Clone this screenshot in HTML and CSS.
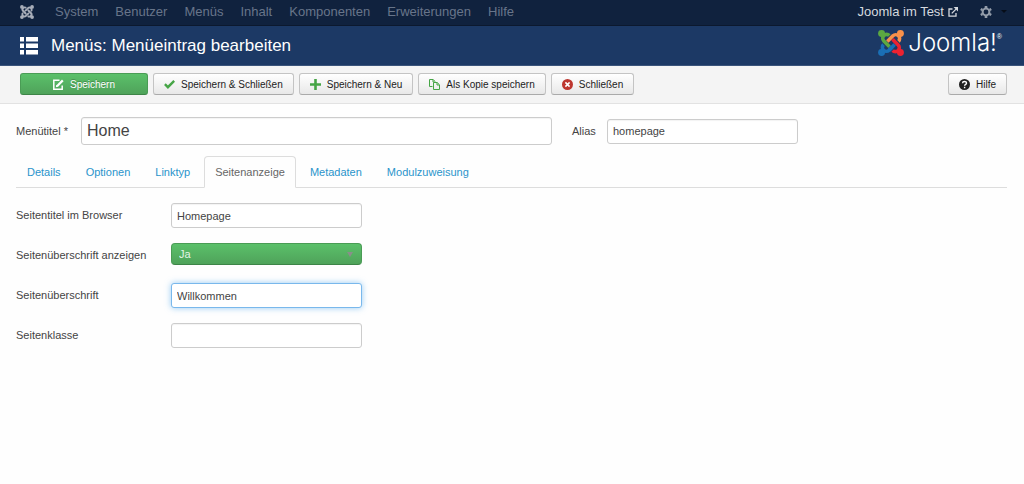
FILE: index.html
```
<!DOCTYPE html>
<html lang="de">
<head>
<meta charset="utf-8">
<title>Menüs: Menüeintrag bearbeiten</title>
<link rel="stylesheet" href="styles.css">
</head>
<body>
<svg class="defs" aria-hidden="true">
  <defs>
    <g id="hook">
      <path d="M15.4 13.4L10.2 18.6a3.6 3.6 0 0 1-5.1-5.1" fill="none" stroke="currentColor" stroke-width="3.3"/>
      <circle cx="3.3" cy="20.7" r="3.2" fill="currentColor"/>
    </g>
  </defs>
</svg>
<nav class="navbar">
  <a class="brand" href="#" aria-label="Kontrollzentrum">
    <svg width="14" height="14" viewBox="0 0 24 24"><use href="#hook"/><use href="#hook" transform="rotate(90 12 12)"/><use href="#hook" transform="rotate(180 12 12)"/><use href="#hook" transform="rotate(270 12 12)"/></svg>
  </a>
  <div class="menu">
    <a href="#">System</a><a href="#">Benutzer</a><a href="#">Menüs</a><a href="#">Inhalt</a><a href="#">Komponenten</a><a href="#">Erweiterungen</a><a href="#">Hilfe</a>
  </div>
  <a class="site" href="#">Joomla im Test
    <svg width="10" height="10" viewBox="0 0 10 10" fill="none" stroke="currentColor" stroke-width="1.3"><path d="M4.5 2H1v7.2h7V6"/><path d="M3.8 6.4L8.3 1.9"/><path d="M5.6 0H10v4.4z" fill="currentColor" stroke="none"/></svg>
  </a>
  <button class="settings" type="button" aria-label="Einstellungen">
    <svg width="12" height="12" viewBox="0 0 12 12"><circle cx="6" cy="6" r="3.400" fill="none" stroke="currentColor" stroke-width="2"/><path d="M6 0v2M6 10v2M.800 3l1.700 1M9.500 8l1.700 1M.800 9l1.700-1M9.500 4l1.700-1" stroke="currentColor" stroke-width="2.600"/></svg>
    <span class="caret"></span>
  </button>
</nav>
<header class="header">
  <svg width="18" height="18" viewBox="0 0 18 18" fill="#fff"><path d="M0 0h4v4.500H0zM6 0h12v4.500H6zM0 6.500h4V11H0zM6 6.500h12V11H6zM0 13h4v4.500H0zM6 13h12v4.500H6z"/></svg>
  <h1>Menüs: Menüeintrag bearbeiten</h1>
  <div class="logo">
    <svg width="26" height="26" viewBox="0 0 24 24">
      <use href="#hook" color="#1a6fb5"/>
      <use href="#hook" color="#5ba841" transform="rotate(90 12 12)"/>
      <use href="#hook" color="#f9914a" transform="rotate(180 12 12)"/>
      <use href="#hook" color="#ec2230" transform="rotate(270 12 12)"/>
      <path d="M10.200 18.600L13 15.800" stroke="#1a6fb5" stroke-width="3.300"/>
    </svg>
    <span class="wordmark">Joomla!</span><span class="reg">®</span>
  </div>
</header>
<div class="toolbar">
  <button class="btn primary" type="button"><svg width="11" height="11" viewBox="0 0 11 11" fill="none" stroke="#fff" stroke-width="1.500"><path d="M6.500 1.200H.800v9h8.400V6.500"/><path d="M4 7.200L9.800 1.400" stroke-width="2.200"/><path d="M2.800 8.300l.600-2.500 1.800 1.800z" fill="#fff" stroke="none"/></svg>Speichern</button>
  <button class="btn" type="button"><svg width="11" height="11" viewBox="0 0 11 11" fill="none" stroke="#46a546" stroke-width="2.400"><path d="M.900 5.200l3 3L10.200 1.900"/></svg>Speichern &amp; Schließen</button>
  <button class="btn" type="button"><svg width="11" height="11" viewBox="0 0 11 11" fill="#46a546"><path d="M4.200 0h2.600v4.200H11v2.600H6.800V11H4.200V6.800H0V4.200h4.200z"/></svg>Speichern &amp; Neu</button>
  <button class="btn" type="button"><svg width="11" height="11" viewBox="0 0 11 11" fill="none" stroke="#46a546"><path d="M3.500 7.500h-3v-7h3.700l2 2M4 .700v2.300h2"/><path d="M4.500 3.500h3.700l2.300 2.300v4.700h-6zM8 3.700v2.300h2.300"/></svg>Als Kopie speichern</button>
  <button class="btn" type="button"><svg width="11" height="11" viewBox="0 0 11 11"><circle cx="5.500" cy="5.500" r="5.500" fill="#bd362f"/><path d="M3.400 3.400l4.200 4.200M7.600 3.400L3.400 7.600" stroke="#fff" stroke-width="1.500"/></svg>Schließen</button>
  <button class="btn help" type="button"><svg width="11" height="11" viewBox="0 0 11 11" fill="none"><circle cx="5.500" cy="5.500" r="5.500" fill="#222"/><path d="M3.500 4.200C3.600 1.900 7.500 1.900 7.500 4.200 7.500 5.400 5.600 5.300 5.600 6.800M5.600 7.700v1.500" stroke="#fff" stroke-width="1.400"/></svg>Hilfe</button>
</div>
<main>
  <form>
    <div class="title-row">
      <label for="title">Menütitel *</label>
      <input class="field big" id="title" type="text" value="Home">
      <label class="alias" for="alias">Alias</label>
      <input class="field" id="alias" type="text" value="homepage">
    </div>
    <div class="tabs">
      <a href="#">Details</a><a href="#">Optionen</a><a href="#">Linktyp</a><a class="active" href="#">Seitenanzeige</a><a href="#">Metadaten</a><a href="#">Modulzuweisung</a>
    </div>
    <div class="fields">
      <label for="page-title">Seitentitel im Browser</label>
      <input class="field" id="page-title" type="text" value="Homepage">
      <label for="show">Seitenüberschrift anzeigen</label>
      <div class="choice"><select id="show"><option>Ja</option><option>Nein</option></select></div>
      <label for="heading">Seitenüberschrift</label>
      <input class="field focused" id="heading" type="text" value="Willkommen">
      <label for="page-class">Seitenklasse</label>
      <input class="field" id="page-class" type="text">
    </div>
  </form>
</main>
</body>
</html>
```
FILE: styles.css
```
* { box-sizing: border-box; }
body {
  margin: 0;
  background: #fefefe;
  color: #444;
  font: 11px/15px "Liberation Sans", Arial, sans-serif;
}
a { text-decoration: none; }
svg { display: block; flex: none; }
button, input, select { font: inherit; }
.defs { position: absolute; width: 0; height: 0; }

.navbar {
  display: flex;
  align-items: center;
  height: 26px;
  padding: 0 17px 2px 20px;
  background: #10223e;
  border-bottom: 1px solid #0c192e;
  font-size: 13px;
}
.brand { color: #a8aeb9; }
.menu { display: flex; gap: 17px; margin-left: 21px; }
.menu a { color: #68758a; }
.site {
  display: flex;
  align-items: center;
  gap: 4px;
  margin-left: auto;
  color: #d5d9df;
}
.settings {
  display: flex;
  align-items: center;
  gap: 9px;
  margin-left: 22px;
  padding: 0;
  border: 0;
  background: none;
  color: #949daa;
}
.caret {
  border: 3px solid transparent;
  border-top-color: #060d18;
  border-bottom: 0;
}

.header {
  display: flex;
  align-items: center;
  height: 40px;
  padding: 0 22px 0 20px;
  background: #1c3965;
  border-bottom: 1px solid #3a547b;
  color: #fff;
}
.header h1 {
  margin: 0 0 0 13px;
  font-size: 17px;
  font-weight: normal;
  line-height: 20px;
}
.logo { display: flex; align-items: center; margin: 0 0 5px auto; }
.wordmark {
  margin-left: 4px;
  font: 300 24px/26px Inter, sans-serif;
}
.reg { align-self: flex-start; font-size: 7px; line-height: 14px; }

.toolbar {
  display: flex;
  gap: 5px;
  padding: 7px 17px 8px 20px;
  background: #f4f4f4;
  border-bottom: 1px solid #e2e2e2;
}
.btn {
  display: flex;
  align-items: center;
  justify-content: center;
  gap: 6px;
  height: 22px;
  padding: 0 10px;
  border: 1px solid #c4c4c4;
  border-bottom-color: #aaa;
  border-radius: 3px;
  background: linear-gradient(#fff, #e8e8e8);
  color: #222;
  font-size: 10px;
  white-space: nowrap;
}
.primary {
  width: 128px;
  border-color: #4a9c55;
  border-bottom-color: #3d8447;
  background: linear-gradient(#5bc06a, #4fa25a);
  color: #fff;
  text-shadow: 0 -1px 0 rgba(0, 0, 0, .25);
}
.help { margin-left: auto; }

main { padding: 13px 17px 20px 16px; }
.title-row { display: flex; align-items: center; }
.title-row label { width: 65px; }
.title-row .alias { width: 35px; margin-left: 20px; }
.field {
  width: 191px;
  height: 25px;
  padding: 0 5px;
  border: 1px solid #ccc;
  border-radius: 3px;
  background: #fff;
  box-shadow: inset 0 1px 1px rgba(0, 0, 0, .05);
  color: #444;
}
.big { width: 471px; height: 28px; font-size: 16px; }
.focused {
  border-color: #79b8ec;
  outline: 0;
  box-shadow: 0 0 6px rgba(82, 168, 236, .6);
}

.tabs {
  display: flex;
  gap: 3px;
  margin-top: 11px;
  border-bottom: 1px solid #ddd;
}
.tabs a {
  margin-bottom: -1px;
  padding: 8px 10px 7px;
  border: 1px solid transparent;
  color: #2a94cb;
}
.tabs .active {
  border-color: #ddd #ddd #fefefe;
  border-radius: 4px 4px 0 0;
  background: #fefefe;
  color: #666;
}

.fields {
  display: grid;
  grid-template-columns: 155px 191px;
  grid-auto-rows: 25px;
  row-gap: 15px;
  align-items: center;
  margin-top: 15px;
}
.choice { position: relative; align-self: start; }
.choice::after {
  content: "";
  position: absolute;
  top: 9px;
  right: 9px;
  border: 3px solid transparent;
  border-top: 5px solid #8a8f8a;
  border-bottom: 0;
  pointer-events: none;
}
.choice select {
  display: block;
  width: 100%;
  height: 22px;
  padding: 0 7px;
  border: 1px solid #4a9c55;
  border-bottom-color: #3d8447;
  border-radius: 4px;
  appearance: none;
  background: linear-gradient(#5bc06a, #4fa25a);
  color: #e4f4e6;
}
```
